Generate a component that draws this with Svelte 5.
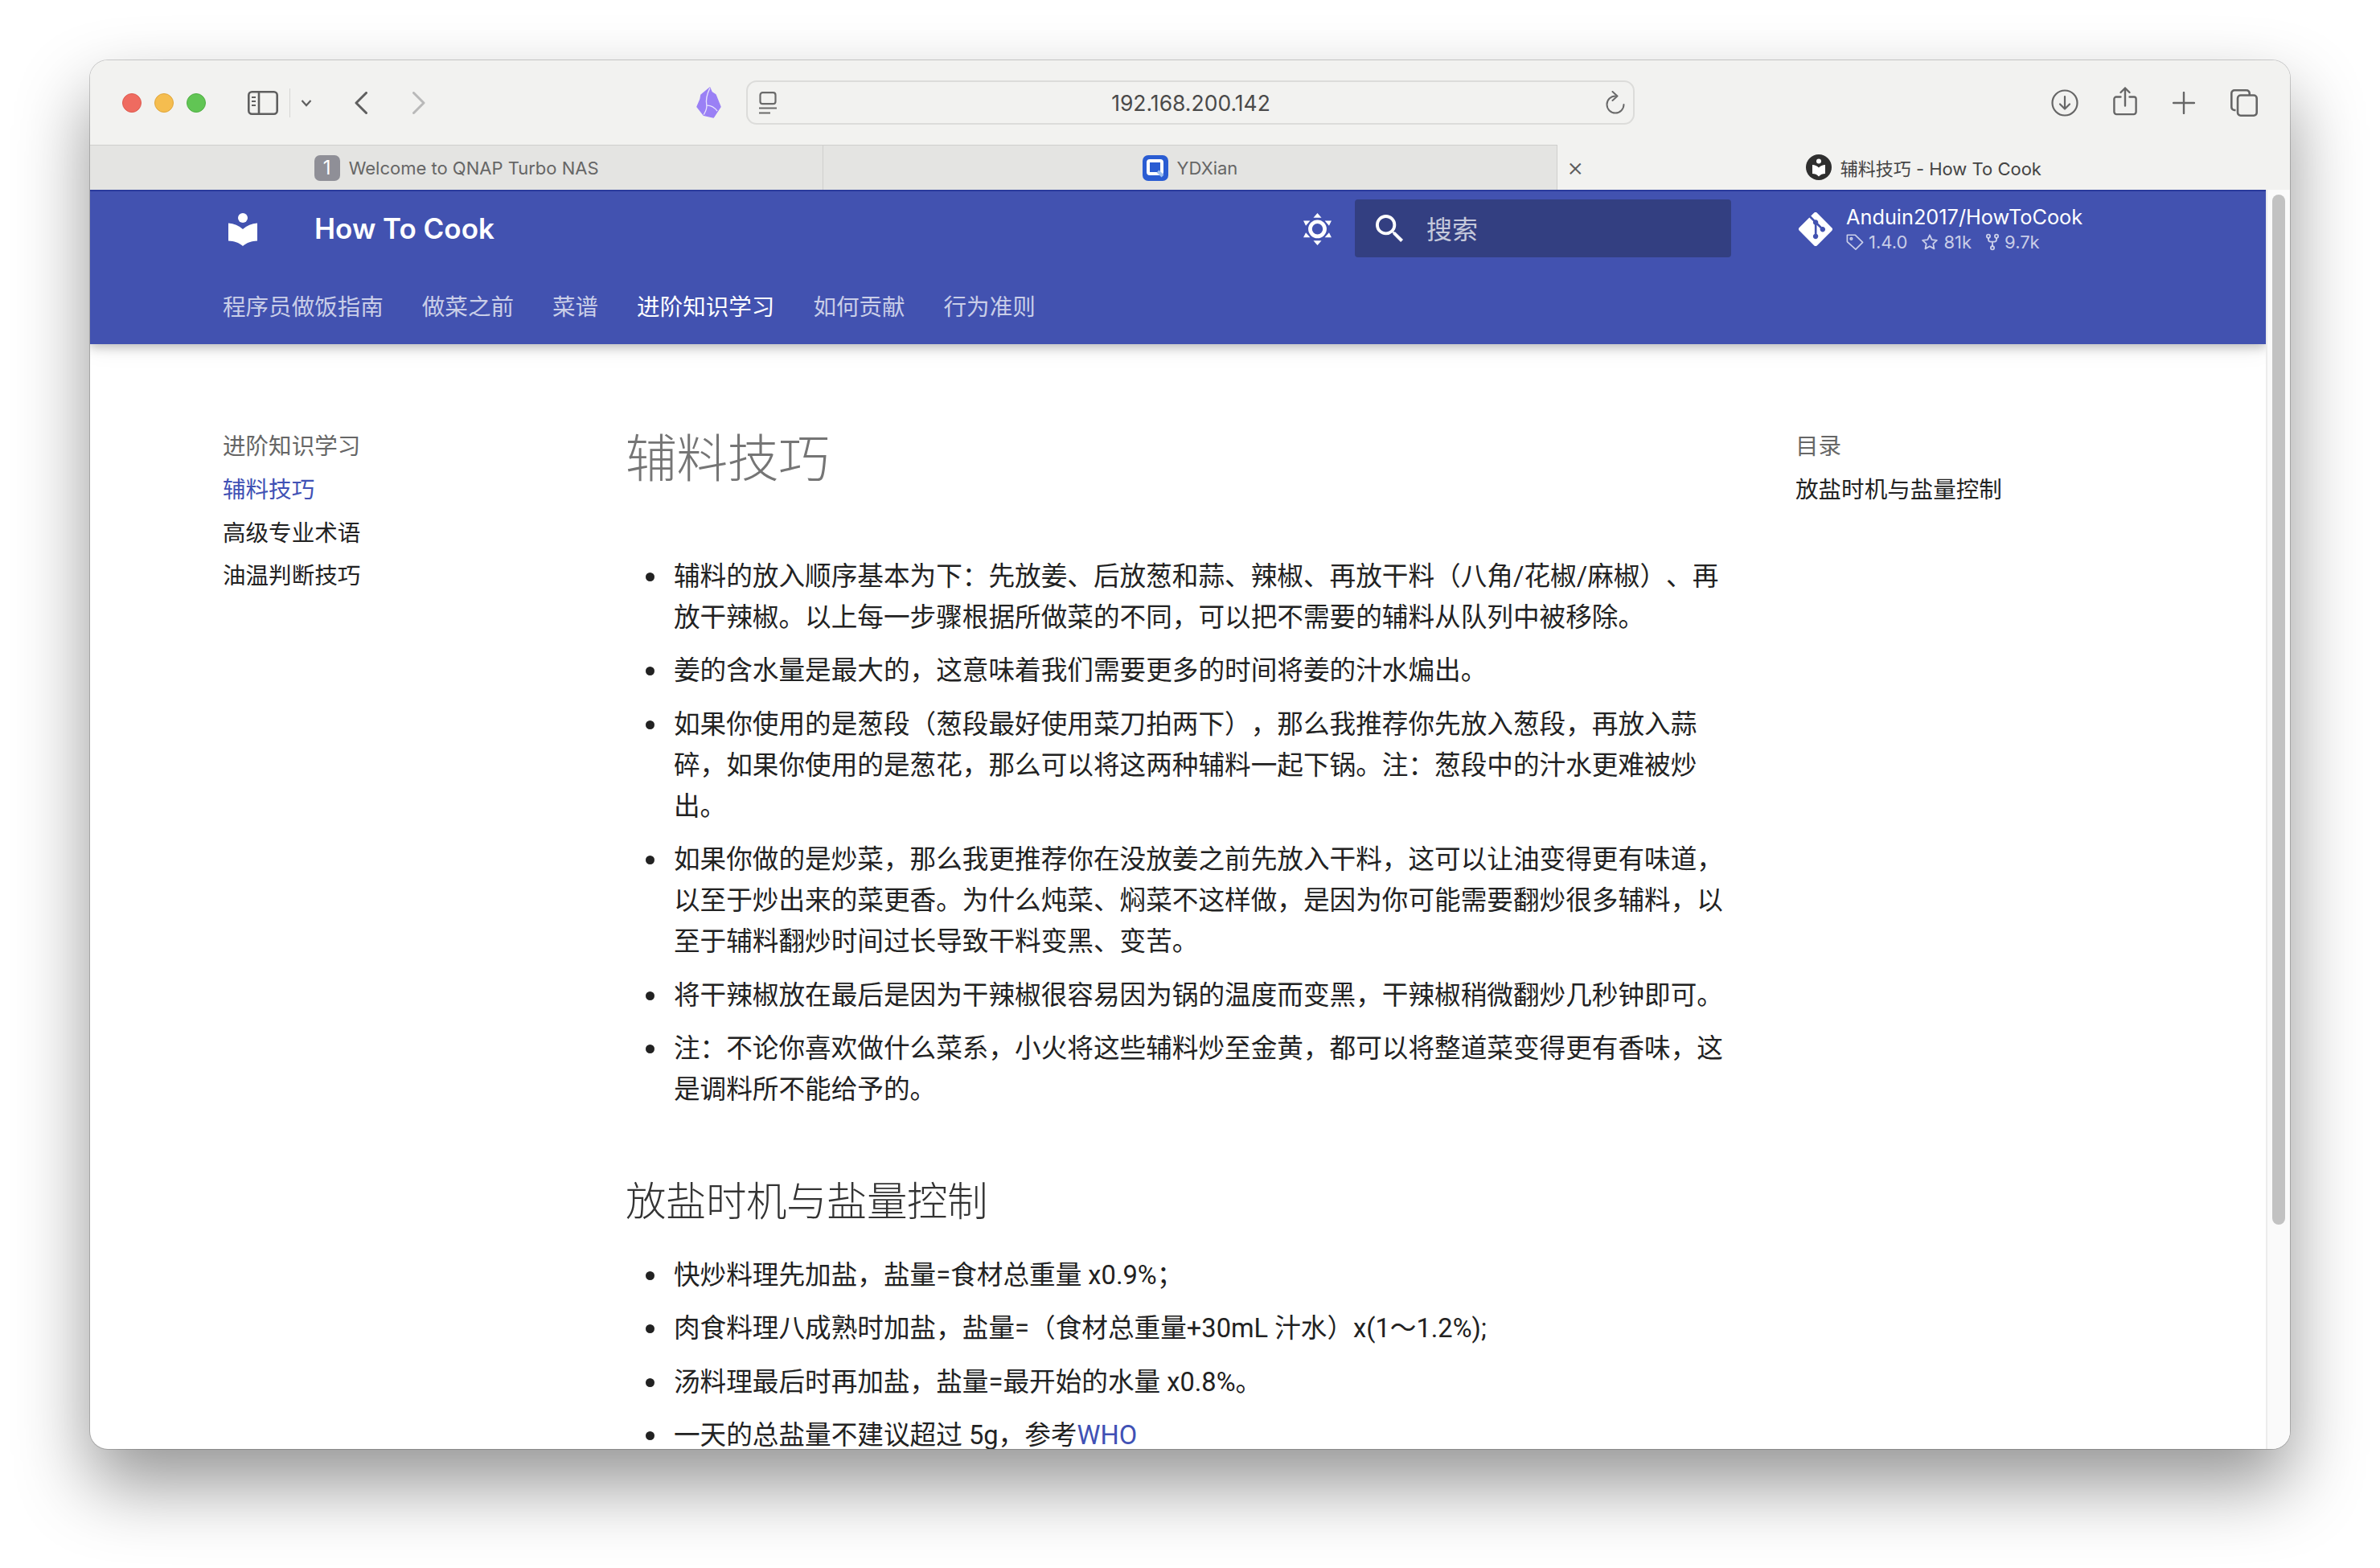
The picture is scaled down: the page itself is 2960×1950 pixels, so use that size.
<script>
  const navTabs = [
    { label: "程序员做饭指南" },
    { label: "做菜之前" },
    { label: "菜谱" },
    { label: "进阶知识学习", active: true },
    { label: "如何贡献" },
    { label: "行为准则" },
  ];

  const sideLinks = [
    { label: "辅料技巧", active: true },
    { label: "高级专业术语" },
    { label: "油温判断技巧" },
  ];

  const firstList = [
    "辅料的放入顺序基本为下：先放姜、后放葱和蒜、辣椒、再放干料（八角/花椒/麻椒）、再放干辣椒。以上每一步骤根据所做菜的不同，可以把不需要的辅料从队列中被移除。",
    "姜的含水量是最大的，这意味着我们需要更多的时间将姜的汁水煸出。",
    "如果你使用的是葱段（葱段最好使用菜刀拍两下），那么我推荐你先放入葱段，再放入蒜碎，如果你使用的是葱花，那么可以将这两种辅料一起下锅。注：葱段中的汁水更难被炒出。",
    "如果你做的是炒菜，那么我更推荐你在没放姜之前先放入干料，这可以让油变得更有味道，以至于炒出来的菜更香。为什么炖菜、焖菜不这样做，是因为你可能需要翻炒很多辅料，以至于辅料翻炒时间过长导致干料变黑、变苦。",
    "将干辣椒放在最后是因为干辣椒很容易因为锅的温度而变黑，干辣椒稍微翻炒几秒钟即可。",
    "注：不论你喜欢做什么菜系，小火将这些辅料炒至金黄，都可以将整道菜变得更有香味，这是调料所不能给予的。",
  ];

  const secondList = [
    "快炒料理先加盐，盐量=食材总重量 x0.9%；",
    "肉食料理八成熟时加盐，盐量=（食材总重量+30mL 汁水）x(1～1.2%);",
    "汤料理最后时再加盐，盐量=最开始的水量 x0.8%。",
  ];
</script>

<div class="stage">
  <div class="window">
    <div class="toolbar">
      <div class="lights">
        <span class="light red"></span>
        <span class="light yellow"></span>
        <span class="light green"></span>
      </div>
      <svg class="sidebar-icon" viewBox="0 0 38 30" fill="none" stroke="#5f5f5f" stroke-width="2.6">
        <rect x="1.3" y="1.3" width="35.4" height="27.4" rx="4" />
        <path d="M14 1.3v27.4" />
        <path d="M5 8h5M5 13h5M5 18h5" stroke-width="2" />
      </svg>
      <span class="divider"></span>
      <svg class="small-chev" viewBox="0 0 14 10" fill="none" stroke="#5f5f5f" stroke-width="2.2"><path d="M1.5 2l5.5 6 5.5-6" /></svg>
      <svg class="back" viewBox="0 0 16 28" fill="none" stroke="#5f5f5f" stroke-width="3" stroke-linecap="round" stroke-linejoin="round"><path d="M14.5 1.5L2 14l12.5 12.5" /></svg>
      <svg class="forward" viewBox="0 0 16 28" fill="none" stroke="#b9b9b9" stroke-width="3" stroke-linecap="round" stroke-linejoin="round"><path d="M1.5 1.5L14 14 1.5 26.5" /></svg>
      <svg class="obsidian" viewBox="45 25 95 118">
        <path d="M98 28L65 55 62 72 50 100 75 132 112 140 138 100 120 55 105 45Z" fill="#9a80f5" stroke="#9a80f5" stroke-width="4" stroke-linejoin="round" />
        <path d="M98 30C86 55 82 75 86 95 88 108 82 118 75 130M86 95C98 94 112 98 126 116" fill="none" stroke="#e9e3fd" stroke-width="4" />
      </svg>
      <div class="address">
        <svg class="reader" viewBox="0 0 22 28" fill="none" stroke="#6a6a6a" stroke-width="2.2">
          <rect x="1.5" y="1.2" width="19" height="14" rx="3" />
          <path d="M0 20.5h22" />
          <path d="M0 26.5h14" />
        </svg>
        <span class="url">192.168.200.142</span>
        <svg class="reload" viewBox="0 0 26 30" fill="none" stroke="#6a6a6a" stroke-width="2" stroke-linecap="round" stroke-linejoin="round">
          <path d="M13 6.5A10.5 10.5 0 1 0 23.5 17" />
          <path d="M9.5 1l6 5.5-6 5.5" />
        </svg>
      </div>
      <div class="actions">
        <svg class="download" viewBox="0 0 34 34" fill="none" stroke="#666" stroke-width="2.2" stroke-linecap="round" stroke-linejoin="round">
          <circle cx="17" cy="17" r="15.5" />
          <path d="M17 9v15M11 18.5l6 6 6-6" />
        </svg>
        <svg class="share" viewBox="0 0 30 36" fill="none" stroke="#666" stroke-width="2.4" stroke-linecap="round" stroke-linejoin="round">
          <path d="M9.5 13H4a2.6 2.6 0 0 0-2.6 2.6v15.8A3 3 0 0 0 4.4 34.6h21.2a3 3 0 0 0 3-3.2V15.6a2.6 2.6 0 0 0-2.6-2.6h-5.5" />
          <path d="M15 24V2M9.5 7.5L15 2l5.5 5.5" />
        </svg>
        <svg class="plus" viewBox="0 0 28 28" fill="none" stroke="#666" stroke-width="2.4" stroke-linecap="round"><path d="M14 1v26M1 14h26" /></svg>
        <svg class="tabs-icon" viewBox="0 0 34 34" fill="none" stroke="#666" stroke-width="2.6">
          <path d="M6.5 26H5a3.7 3.7 0 0 1-3.7-3.7V5A3.7 3.7 0 0 1 5 1.3h15A3.7 3.7 0 0 1 23.7 5v2" />
          <rect x="9" y="7.5" width="23.7" height="25.2" rx="3.7" />
        </svg>
      </div>
    </div>

    <div class="tabbar">
      <div class="tab">
        <span class="tab-num">1</span>
        <span>Welcome to QNAP Turbo NAS</span>
      </div>
      <div class="tab">
        <svg class="tab-q" viewBox="0 0 32 32">
          <rect width="32" height="32" rx="7" fill="#2a5cd2" />
          <rect x="7" y="7" width="17" height="16" rx="2" fill="none" stroke="#fff" stroke-width="4" />
          <path d="M19 20l6 6" stroke="#9fc0ee" stroke-width="4" />
        </svg>
        <span>YDXian</span>
      </div>
      <div class="tab current">
        <span class="close">×</span>
        <svg class="tab-logo" viewBox="0 0 32 32">
          <circle cx="16" cy="16" r="16" fill="#2f2f2f" />
          <circle cx="16" cy="8.5" r="3" fill="#fff" />
          <path d="M8 13c3 0 6 1.5 8 3.5 2-2 5-3.5 8-3.5v11c-3 0-6 1-8 3.5-2-2.5-5-3.5-8-3.5z" fill="#fff" />
        </svg>
        <span>辅料技巧 - How To Cook</span>
      </div>
    </div>

    <div class="viewport">
      <div class="page">
        <header class="site-header">
          <div class="header-top">
            <svg class="logo" viewBox="0 0 36 41" fill="#fff">
              <circle cx="18" cy="6" r="6" />
              <path d="M0 12.5c7 .5 13 3 18 7.5 5-4.5 11-7 18-7.5V34.5c-7 .5-13 2-18 6.5-5-4.5-11-6-18-6.5z" />
            </svg>
            <span class="site-title">How To Cook</span>
            <svg class="sun" viewBox="30 25 110 125" fill="#fff">
              <path d="M85 28l15 17H70zM85 147l-15-17h30zM33 56h25L42 75zM137 56h-25l16 19zM33 118h25L42 100zM137 118h-25l16-18z" />
              <circle cx="85" cy="87" r="27" fill="none" stroke="#fff" stroke-width="14" />
            </svg>
            <div class="search">
              <svg class="magnify" viewBox="3 3 18 18" fill="#fff">
                <path d="M9.5 3A6.5 6.5 0 0 1 16 9.5c0 1.61-.59 3.09-1.56 4.23l.27.27h.79l5 5-1.5 1.5-5-5v-.79l-.27-.27A6.516 6.516 0 0 1 9.5 16 6.5 6.5 0 0 1 3 9.5 6.5 6.5 0 0 1 9.5 3m0 2C7 5 5 7 5 9.5S7 14 9.5 14 14 12 14 9.5 12 5 9.5 5Z" />
              </svg>
              <span>搜索</span>
            </div>
            <div class="repo">
              <svg class="git" viewBox="0 32 448 448" fill="#fff">
                <path d="M439.55 236.05 244 40.45a28.87 28.87 0 0 0-40.81 0l-40.66 40.63 51.52 51.52c27.06-9.14 52.68 16.77 43.39 43.68l49.66 49.66c34.23-11.8 61.18 31 35.47 56.69-26.49 26.49-70.21-2.87-56-37.34L240.22 199v121.85c25.3 12.54 22.26 41.85 9.08 55a34.34 34.34 0 0 1-48.55 0c-17.57-17.6-11.07-46.91 11.25-56v-123c-20.8-8.51-24.6-30.74-18.64-45L142.57 101 8.45 235.14a28.86 28.86 0 0 0 0 40.81l195.61 195.6a28.86 28.86 0 0 0 40.8 0l194.69-194.69a28.86 28.86 0 0 0 0-40.81z" />
              </svg>
              <div class="repo-text">
                <div class="repo-name">Anduin2017/HowToCook</div>
                <div class="facts">
                  <span class="fact">
                    <svg class="tag" viewBox="0 0 24 22" fill="none" stroke="currentColor" stroke-width="1.8" stroke-linejoin="round"><path d="M1.5 1.5h11l10 10-9.5 9.5-11.5-10.5z" /><circle cx="7" cy="6.5" r="1.4" /></svg>
                    1.4.0
                  </span>
                  <span class="fact">
                    <svg viewBox="0 0 24 24" fill="none" stroke="currentColor" stroke-width="2" stroke-linejoin="round"><path d="M12 2.5l2.9 6.3 6.8.8-5 4.7 1.3 6.8-6-3.4-6 3.4 1.3-6.8-5-4.7 6.8-.8z" /></svg>
                    81k
                  </span>
                  <span class="fact">
                    <svg class="fork" viewBox="0 0 18 24" fill="none" stroke="currentColor" stroke-width="2"><circle cx="3.5" cy="4" r="2.3" /><circle cx="14.5" cy="4" r="2.3" /><circle cx="9" cy="20" r="2.3" /><path d="M3.5 6.5v2a3 3 0 0 0 3 3h5a3 3 0 0 0 3-3v-2M9 11.5v6" /></svg>
                    9.7k
                  </span>
                </div>
              </div>
            </div>
          </div>
          <nav class="header-nav">
            {#each navTabs as t}
              <a class:active={t.active} href="#top">{t.label}</a>
            {/each}
          </nav>
        </header>

        <div class="body">
          <aside class="sidebar">
            <div class="side-title">进阶知识学习</div>
            {#each sideLinks as l}
              <a class:active={l.active} href="#top">{l.label}</a>
            {/each}
          </aside>

          <article class="article">
            <h1>辅料技巧</h1>
            <ul class="first">
              {#each firstList as item}
                <li>{item}</li>
              {/each}
            </ul>
            <h2>放盐时机与盐量控制</h2>
            <ul>
              {#each secondList as item}
                <li>{item}</li>
              {/each}
              <li>一天的总盐量不建议超过 5g，参考<a href="#top">WHO</a></li>
            </ul>
          </article>

          <aside class="toc">
            <div class="side-title">目录</div>
            <a href="#top">放盐时机与盐量控制</a>
          </aside>
        </div>
      </div>
      <div class="scroll-track">
        <div class="scroll-thumb"></div>
      </div>
    </div>
  </div>
</div>

<style>
  :global(body) {
    margin: 0;
    background: #fff;
  }

  * {
    box-sizing: border-box;
  }

  .stage {
    width: 2960px;
    height: 1950px;
    padding: 75px 112px 0;
    font-family: Inter, "Noto Sans CJK SC", sans-serif;
    overflow: hidden;
    text-spacing-trim: space-all;
  }

  .window {
    width: 2736px;
    height: 1727px;
    border-radius: 22px;
    overflow: hidden;
    background: #fff;
    box-shadow: 0 0 0 1px rgba(0, 0, 0, 0.18), 0 44px 90px rgba(0, 0, 0, 0.42);
    display: flex;
    flex-direction: column;
  }

  /* title bar */
  .toolbar {
    height: 105px;
    flex: none;
    background: #f2f2f0;
    display: flex;
    align-items: center;
    padding-left: 40px;
  }
  .lights {
    display: flex;
    gap: 16px;
  }
  .light {
    width: 24px;
    height: 24px;
    border-radius: 50%;
  }
  .red { background: #ef6b60; border: 1px solid #de5b50; }
  .yellow { background: #f5bd4f; border: 1px solid #e0a63a; }
  .green { background: #61c554; border: 1px solid #50ae44; }
  .sidebar-icon {
    width: 38px;
    height: 30px;
    margin-left: 52px;
  }
  .divider {
    width: 1px;
    height: 36px;
    background: #d6d6d4;
    margin-left: 14px;
  }
  .small-chev {
    width: 14px;
    height: 10px;
    margin-left: 13px;
  }
  .back {
    width: 16px;
    height: 28px;
    margin-left: 53px;
  }
  .forward {
    width: 16px;
    height: 28px;
    margin-left: 56px;
  }
  .obsidian {
    width: 32px;
    height: 39px;
    margin-left: 336px;
  }
  .address {
    width: 1105px;
    height: 55px;
    margin-left: 31px;
    border: 2px solid #dcdcda;
    border-radius: 13px;
    display: flex;
    align-items: center;
    padding: 0 9px 0 14px;
  }
  .reader {
    width: 22px;
    height: 28px;
  }
  .url {
    flex: 1;
    text-align: center;
    font-size: 26.5px;
    color: #4a4a4a;
  }
  .reload {
    width: 26px;
    height: 30px;
  }
  .actions {
    display: flex;
    align-items: center;
    margin-left: 518px;
  }
  .download { width: 34px; height: 34px; }
  .share { width: 30px; height: 37px; margin-left: 43px; margin-top: -4px; }
  .plus { width: 28px; height: 28px; margin-left: 44px; }
  .tabs-icon { width: 34px; height: 34px; margin-left: 44px; }

  .tabbar {
    height: 56px;
    flex: none;
    display: flex;
    background: #e4e4e2;
    border-top: 1px solid #cfcfcd;
    font-size: 22px;
    color: #666;
  }
  .tab {
    flex: 1;
    display: flex;
    align-items: center;
    justify-content: center;
    gap: 11px;
    border-right: 1px solid #cfcfcd;
    position: relative;
  }
  .tab:last-child {
    border-right: none;
  }
  .tab.current {
    background: #f2f2f0;
    color: #444;
    margin-top: -1px;
  }
  .tab-num {
    width: 32px;
    height: 32px;
    border-radius: 7px;
    background: #8f8f97;
    color: #fff;
    font-size: 24px;
    display: flex;
    align-items: center;
    justify-content: center;
  }
  .tab-q,
  .tab-logo {
    width: 32px;
    height: 32px;
  }
  .close {
    position: absolute;
    left: 12px;
    top: 50%;
    transform: translateY(-50%);
    font-size: 32px;
    line-height: 1;
    color: #5c5c5c;
    font-weight: 300;
  }

  /* browser viewport */
  .viewport {
    flex: 1;
    min-height: 0;
    display: flex;
  }
  .page {
    width: 2706px;
    height: 100%;
    overflow: hidden;
    flex: none;
  }
  .scroll-track {
    flex: 1;
    background: #fafafa;
    border-left: 2px solid #ececec;
    padding: 6px 6px 0;
  }
  .scroll-thumb {
    width: 16px;
    height: 1281px;
    border-radius: 8px;
    background: #c2c2c2;
  }

  /* site header */
  .site-header {
    height: 192px;
    background: #4252b0;
    border-top: 2px solid #2a3a9c;
    box-shadow: 0 4px 12px rgba(0, 0, 0, 0.22), 0 0 32px rgba(0, 0, 0, 0.1);
    position: relative;
    display: flex;
    flex-direction: column;
    color: #fff;
  }
  .header-top {
    height: 94px;
    display: flex;
    align-items: center;
    padding-left: 172px;
  }
  .logo {
    width: 36px;
    height: 41px;
  }
  .site-title {
    margin-left: 71px;
    margin-bottom: 2px;
    font-size: 35px;
    font-weight: 600;
    width: 1037px;
    flex: none;
  }
  .sun {
    width: 37px;
    height: 42px;
    margin-left: 192px;
  }
  .search {
    width: 468px;
    height: 72px;
    margin-left: 28px;
    margin-bottom: 2px;
    background: #333f81;
    border-radius: 4px;
    display: flex;
    align-items: center;
    padding-left: 26px;
    gap: 28px;
    font-size: 32px;
    color: rgba(255, 255, 255, 0.72);
  }
  .search span {
    margin-top: -3px;
  }
  .magnify {
    width: 35px;
    height: 35px;
  }
  .repo {
    margin-left: 84px;
    display: flex;
    align-items: center;
    gap: 17px;
  }
  .git {
    width: 42px;
    height: 42px;
  }
  .repo-name {
    font-size: 25.3px;
    line-height: 32px;
  }
  .facts {
    display: flex;
    gap: 17px;
    font-size: 22px;
    line-height: 30px;
    color: rgba(255, 255, 255, 0.72);
  }
  .fact {
    display: flex;
    align-items: center;
    gap: 6px;
  }
  .fact svg {
    width: 22px;
    height: 22px;
  }
  .fact svg.fork {
    width: 18px;
    height: 22px;
  }

  .header-nav {
    display: flex;
    gap: 48px;
    padding-left: 165px;
    padding-top: 28px;
    font-size: 28.56px;
    line-height: 44px;
  }
  .header-nav a {
    color: rgba(255, 255, 255, 0.72);
    text-decoration: none;
  }
  .header-nav a.active {
    color: #fff;
  }

  /* page body */
  .body {
    display: flex;
    padding: 100px 0 0 165px;
  }
  .sidebar {
    width: 501px;
    flex: none;
    display: flex;
    flex-direction: column;
    font-size: 28.56px;
    line-height: 53.8px;
  }
  .sidebar a,
  .toc a {
    color: #222;
    text-decoration: none;
  }
  .sidebar a.active {
    color: #4051b5;
  }
  .side-title {
    color: #666;
  }
  .article {
    width: 1372px;
    flex: none;
    color: #222;
    font-family: Roboto, "Noto Sans CJK SC", sans-serif;
    font-size: 32.64px;
    line-height: 51px;
  }
  h1 {
    margin: 0;
    padding-top: 6px;
    font-size: 64px;
    line-height: 76px;
    font-weight: 300;
    letter-spacing: -0.01em;
    color: #757575;
  }
  h2 {
    margin: 82px 0 0;
    font-size: 50.5px;
    line-height: 64px;
    font-weight: 300;
    letter-spacing: -0.01em;
    color: #333;
  }
  ul {
    margin: 0;
    padding: 34px 0 0 60px;
    list-style: none;
  }
  ul.first {
    padding-top: 82px;
  }
  li {
    margin-bottom: 15.4px;
    position: relative;
  }
  li::before {
    content: "";
    position: absolute;
    left: -35px;
    top: 20px;
    width: 11px;
    height: 11px;
    border-radius: 50%;
    background: #222;
  }
  li a {
    color: #4051b5;
    text-decoration: none;
  }
  .toc {
    margin-left: 83px;
    width: 400px;
    flex: none;
    display: flex;
    flex-direction: column;
    font-size: 28.56px;
    line-height: 53.8px;
  }
</style>
